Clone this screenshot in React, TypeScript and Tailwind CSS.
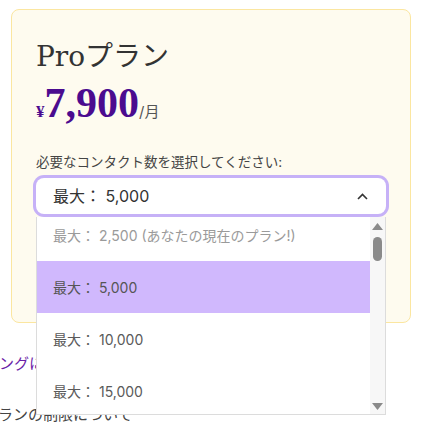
const sans = "font-['Inter','Noto_Sans_CJK_JP',sans-serif]"

const options = [
  { label: "最大： 2,500 (あなたの現在のプラン!)", disabled: true },
  { label: "最大： 5,000", selected: true },
  { label: "最大： 10,000" },
  { label: "最大： 15,000" },
]

function ScrollArrow({ up }: { up?: boolean }) {
  return (
    <svg width="11" height="7" viewBox="0 0 11 7" className="block">
      <path d={up ? "M0 7 L5.5 0 L11 7 Z" : "M0 0 L5.5 7 L11 0 Z"} fill="#8a8a8a" />
    </svg>
  )
}

function Dropdown() {
  return (
    <div className="absolute left-0 right-0 top-[calc(100%+3px)] z-10 flex h-[198px] overflow-hidden border border-t-0 border-[#dcdcdc] bg-white">
      <ul className="-mt-2 flex-1">
        {options.map((o) => (
          <li
            key={o.label}
            className={
              "flex h-[52px] items-center pl-[16px] text-[14px] " +
              (o.selected ? "bg-[#d0b8fd] text-[#555]" : o.disabled ? "text-[#9a9a9a]" : "text-[#5a5a5a]")
            }
          >
            {o.label}
          </li>
        ))}
      </ul>
      <div className="flex w-[15px] flex-col items-center bg-[#f7f7f7] pt-[6px] pb-[4px]">
        <ScrollArrow up />
        <div className="mt-[7px] h-[24px] w-[9px] rounded-full bg-[#8a8a8a]" />
        <div className="flex-1" />
        <ScrollArrow />
      </div>
    </div>
  )
}

export default function App() {
  return (
    <div className={"relative h-[422px] w-[425px] overflow-hidden bg-white " + sans}>
      <div className="ml-[11px] mt-[9px] h-[314px] w-[400px] rounded-lg border border-[#fbe6a0] bg-[#fefbef] px-6 pt-[29px]">
        <h2 className="font-['DejaVu_Serif','Noto_Sans_CJK_JP',serif] text-[28px] leading-[36px] text-[#333]">
          Proプラン
        </h2>
        <div className="mt-[6px] flex items-baseline font-['Liberation_Serif',serif] text-[#4b0b8f]">
          <span className="text-[17px] font-bold">¥</span>
          <span className="text-[42px] font-bold leading-[44px]">7,900</span>
          <span className={"text-[15px] text-[#555] " + sans}>/月</span>
        </div>
        <p className="mt-[28px] text-[13.5px] leading-[18px] text-[#444]">必要なコンタクト数を選択してください:</p>
        <div className="relative mt-[7px]">
          <div className="flex h-[36px] items-center justify-between rounded-lg bg-white pl-[17px] pr-[18px] text-[16px] text-[#333] ring-[3px] ring-[#c6b1f7]">
            <span>最大： 5,000</span>
            <svg width="11" height="7" viewBox="0 0 11 7" fill="none">
              <path d="M1 6 L5.5 1.5 L10 6" stroke="#333" strokeWidth="1.6" />
            </svg>
          </div>
          <Dropdown />
        </div>
      </div>
      <p className="-ml-[30px] mt-[31px] whitespace-nowrap text-[15px] leading-[20px] text-[#6b1fa8]">
        ティングに関するご案内
      </p>
      <p className="-ml-[17px] mt-[31px] whitespace-nowrap text-[15px] leading-[20px] text-[#444]">
        プランの制限について
      </p>
    </div>
  )
}
